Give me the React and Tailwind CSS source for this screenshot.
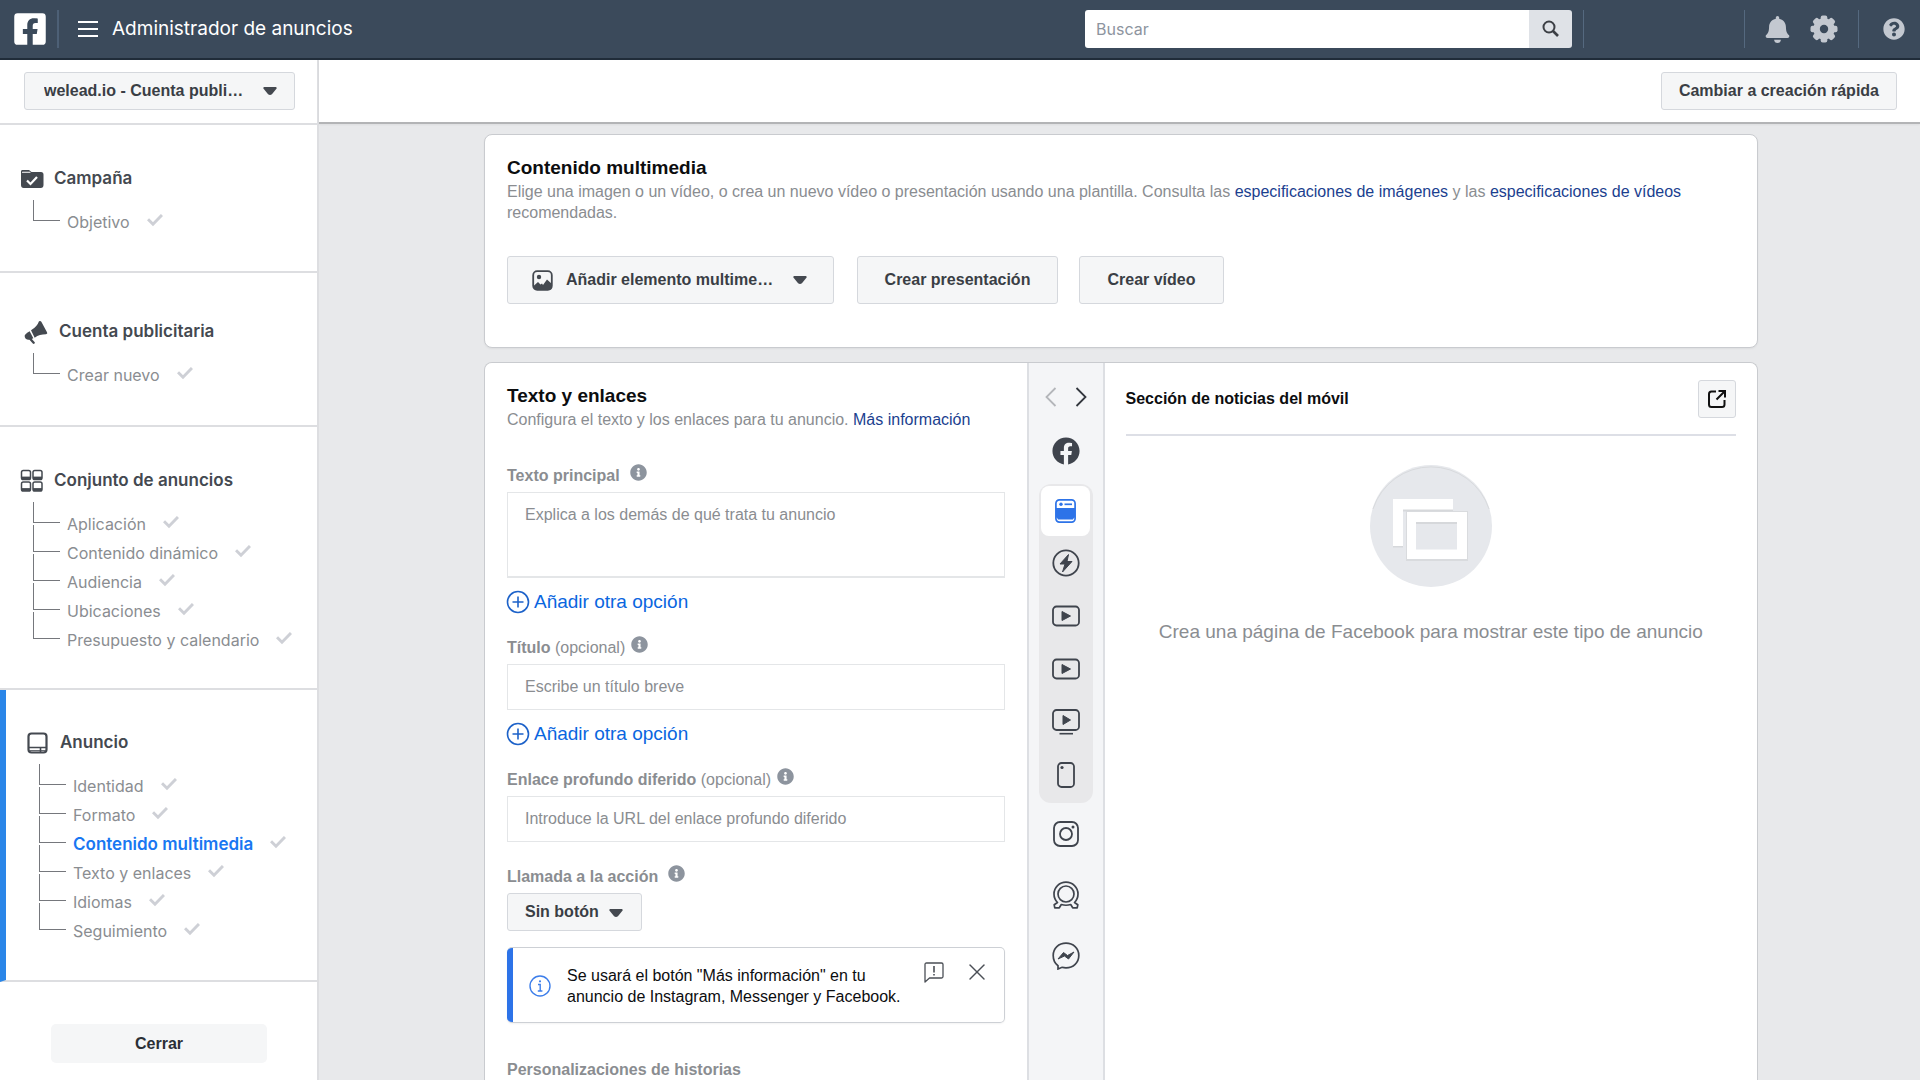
import { FaFacebook, FaFacebookSquare, FaBell, FaQuestionCircle, FaInfoCircle } from 'react-icons/fa';
import { X } from 'lucide-react';

//------------------------------------------------------------------------------------------------
// Navigation data
//------------------------------------------------------------------------------------------------
const sections = [
  {
    title: 'Campaña',
    icon: FolderIcon,
    pad: 'pt-[42px] pb-12',
    items: ['Objetivo'],
  },
  {
    title: 'Cuenta publicitaria',
    icon: MegaphoneIcon,
    pad: 'pt-[47px] pb-[49px]',
    items: ['Crear nuevo'],
  },
  {
    title: 'Conjunto de anuncios',
    icon: GridIcon,
    pad: 'pt-[42px] pb-[47px]',
    items: ['Aplicación', 'Contenido dinámico', 'Audiencia', 'Ubicaciones', 'Presupuesto y calendario'],
  },
  {
    title: 'Anuncio',
    icon: AdIcon,
    pad: 'pt-[41px] pb-12',
    active: true,
    items: ['Identidad', 'Formato', 'Contenido multimedia', 'Texto y enlaces', 'Idiomas', 'Seguimiento'],
  },
];

const feedPlacements = [
  { label: 'Artículos instantáneos', icon: BoltIcon },
  { label: 'Vídeos in-stream', icon: PlayIcon },
  { label: 'Vídeos sugeridos', icon: PlayIcon },
  { label: 'Marketplace', icon: TvIcon },
  { label: 'Historias', icon: PhoneIcon },
];

const otherPlacements = [
  { label: 'Instagram', icon: InstagramIcon },
  { label: 'Audience Network', icon: AudienceIcon },
  { label: 'Messenger', icon: MessengerIcon },
];

//------------------------------------------------------------------------------------------------
// Icons
//------------------------------------------------------------------------------------------------
function Caret({ className = '' }) {
  return (
    <svg className={`w-[14px] h-2 shrink-0 ${className}`} viewBox="0 0 14 8" fill="#444950" aria-hidden="true">
      <path d="M1.6 0h10.8c1.2 0 1.6 1 1 1.8L8.9 7.2c-1 1-2.8 1-3.8 0L.6 1.8C0 1 .4 0 1.6 0z" />
    </svg>
  );
}

// The tick sits in the upper part of its box, a little above the middle of the text
function Check() {
  return (
    <svg className="w-4 h-[17px] shrink-0" viewBox="0 0 16 17" fill="none" stroke="#ced0d6" strokeWidth="3" aria-hidden="true">
      <path d="M1 5.2l5 5L15 1" />
    </svg>
  );
}

function Chevron({ d, color }) {
  return (
    <svg className="w-3 h-5" viewBox="0 0 12 20" fill="none" stroke={color} strokeWidth="1.8" aria-hidden="true">
      <path d={d} />
    </svg>
  );
}

function FolderIcon() {
  return (
    <svg className="w-6 h-5" viewBox="0 0 24 20" aria-hidden="true">
      <path d="M1 4V2.5C1 1.4 1.9 1 3 1h6l2.5 2H21c1.7 0 2.5 1 2.5 2.5V16c0 1.8-1 3-2.7 3H3.7C2 19 1 17.800 1 16z" fill="#444950" />
      <path d="M2.5 3.3h7.5" stroke="#fff" strokeWidth="1.1" strokeLinecap="round" />
      <path d="M7 11.5l3.5 3.5 6.5-7" fill="none" stroke="#fff" strokeWidth="2.2" />
    </svg>
  );
}

function MegaphoneIcon() {
  return (
    <svg className="w-[29px] h-6" viewBox="-10 0 87 72" fill="#444950" aria-hidden="true">
      <path d="M47 4q4-3 7 1l17 32q3 5-3 6-19 0-34 10L23 31Q41 21 47 4z" />
      <path d="M19 34l11 21q-8 5-16 4Q4 57 4 47q1-5 15-13z" />
      <path d="M21 57l10 11" stroke="#444950" strokeWidth="7" strokeLinecap="round" />
    </svg>
  );
}

function GridIcon() {
  return (
    <svg className="w-6 h-6" viewBox="0 0 24 24" aria-hidden="true">
      {[[1.5, 1.5], [13, 1.5], [1.5, 13], [13, 13]].map(([x, y]) => (
        <g key={`${x}-${y}`}>
          <rect x={x} y={y} width="9" height="9" rx="1.8" fill="none" stroke="#444950" strokeWidth="1.5" />
          <path d={`M${x} ${y + 7.5}h9`} stroke="#444950" strokeWidth="2.8" />
        </g>
      ))}
    </svg>
  );
}

function AdIcon() {
  return (
    <svg className="w-6 h-6" viewBox="0 0 24 24" fill="none" stroke="#444950" aria-hidden="true">
      <rect x="2.5" y="2.5" width="18" height="19" rx="3" strokeWidth="2.2" />
      <path d="M3 16.5h17M14.5 17v4" strokeWidth="1.6" />
      <path d="M4 19.7h15" strokeWidth="1" />
    </svg>
  );
}

function GearIcon() {
  return (
    <svg className="w-7 h-7" viewBox="0 0 28 28" aria-hidden="true">
      {[0, 45, 90, 135].map((deg) => (
        <rect key={deg} x="10.7" y="0.5" width="6.6" height="27" rx="2" fill="#c3c8d0" transform={`rotate(${deg} 14 14)`} />
      ))}
      <circle cx="14" cy="14" r="7.5" fill="none" stroke="#c3c8d0" strokeWidth="6.5" />
      <circle cx="14" cy="14" r="4.2" fill="#3b4a5b" />
    </svg>
  );
}

function SearchIcon() {
  return (
    <svg className="w-5 h-5" viewBox="0 0 20 20" fill="none" stroke="#3c3f45" aria-hidden="true">
      <circle cx="8" cy="8" r="5.5" strokeWidth="2" />
      <path d="M12 12l5 5" strokeWidth="2.6" />
    </svg>
  );
}

function ImageIcon() {
  return (
    <svg className="w-[21px] h-[21px]" viewBox="0 0 21 21" aria-hidden="true">
      <rect x="1.2" y="1.2" width="18.6" height="18.6" rx="4" fill="none" stroke="#444950" strokeWidth="1.8" />
      <circle cx="7" cy="7" r="2.2" fill="#444950" />
      <path d="M1.5 16l4.5-4 2.5 2.5 1.5-1 1 1.5 4-5.5 5 4.5v2.5q0 3.5-3.5 3.5h-12q-3 0-3-4z" fill="#444950" />
    </svg>
  );
}

function PlusCircle() {
  return (
    <svg className="w-6 h-6" viewBox="0 0 24 24" fill="none" stroke="#1d62c9" strokeWidth="1.6" aria-hidden="true">
      <circle cx="12" cy="12" r="10.5" />
      <path d="M12 6.5v11M6.5 12h11" />
    </svg>
  );
}

function OpenIcon() {
  return (
    <svg className="w-5 h-5" viewBox="0 0 20 20" fill="none" stroke="#111" strokeWidth="2" aria-hidden="true">
      <path d="M9 2.5H4.5q-2.5 0-2.5 2.5V15.5Q2 18 4.5 18h10.5q2.5 0 2.5-2.5V11" />
      <path d="M9.5 10.5L17 3M11.5 2h6.5v6.5" />
    </svg>
  );
}

function FeedIcon() {
  return (
    <svg className="w-[21px] h-6" viewBox="0 0 21 24" aria-hidden="true">
      <rect x="0.9" y="0.9" width="19.2" height="22.2" rx="3.5" fill="#fff" stroke="#2d73e8" strokeWidth="1.7" />
      <path d="M1 9h19v9.5H1z" fill="#2d73e8" />
      <path d="M1.5 18l1.5 2.5h15l1.5-2.5z" fill="#2d73e8" />
      <circle cx="6" cy="5.3" r="1.7" fill="#2d73e8" />
      <path d="M9.5 5.3h7.5" stroke="#2d73e8" strokeWidth="1.7" />
    </svg>
  );
}

function BoltIcon() {
  return (
    <svg className="w-7 h-7" viewBox="0 0 28 28" aria-hidden="true">
      <circle cx="14" cy="14" r="12.7" fill="none" stroke="#3f444d" strokeWidth="1.8" />
      <path d="M16.5 5.5L8 15h5l-2.5 8L20 12.500h-5z" fill="#3f444d" stroke="#3f444d" strokeLinejoin="round" />
    </svg>
  );
}

function PlayIcon() {
  return (
    <svg className="w-7 h-[22px]" viewBox="0 0 28 22" aria-hidden="true">
      <rect x="1" y="1.5" width="26" height="19" rx="3.5" fill="none" stroke="#3f444d" strokeWidth="1.8" />
      <path d="M10 6.5v9l8.5-4.5z" fill="#3f444d" stroke="#3f444d" strokeLinejoin="round" />
    </svg>
  );
}

function TvIcon() {
  return (
    <svg className="w-7 h-[26px]" viewBox="0 0 28 26" aria-hidden="true">
      <rect x="1" y="1" width="26" height="20" rx="3.5" fill="none" stroke="#3f444d" strokeWidth="1.8" />
      <path d="M11 6.5v9l7.5-4.5z" fill="#3f444d" stroke="#3f444d" strokeLinejoin="round" />
      <path d="M7.5 24.7h13.5" stroke="#3f444d" strokeWidth="1.6" />
    </svg>
  );
}

function PhoneIcon() {
  return (
    <svg className="w-[18px] h-[26px]" viewBox="0 0 18 26" aria-hidden="true">
      <rect x="1" y="1" width="16" height="24" rx="3.5" fill="none" stroke="#3f444d" strokeWidth="1.8" />
      <circle cx="5" cy="5.5" r="1.6" fill="#3f444d" />
    </svg>
  );
}

function InstagramIcon() {
  return (
    <svg className="w-[26px] h-[26px]" viewBox="0 0 26 26" fill="none" stroke="#3f444d" strokeWidth="1.8" aria-hidden="true">
      <rect x="1" y="1" width="24" height="24" rx="6" />
      <circle cx="13" cy="13" r="6" />
      <circle cx="20" cy="6" r="1.5" fill="#3f444d" stroke="none" />
    </svg>
  );
}

function AudienceIcon() {
  return (
    <svg className="w-7 h-7" viewBox="0 0 28 28" fill="none" stroke="#3f444d" strokeWidth="1.7" strokeLinejoin="round" aria-hidden="true">
      <circle cx="14" cy="13" r="8" />
      <path d="M5.5 21.5A12 12 0 1 1 22.5 21.5l3.3 2.3-.6 3h-4.5l-2-3.3q-4.7 1.5-9.4 0l-2 3.3H2.800l-.6-3z" />
    </svg>
  );
}

function MessengerIcon() {
  return (
    <svg className="w-7 h-7" viewBox="0 0 28 28" aria-hidden="true">
      <path d="M14 1.2c7.3 0 12.8 5.3 12.8 12.3S21.3 25.8 14 25.8q-2 0-4-.5L6 27v-3.3C3 21.5 1.2 18 1.2 13.5 1.2 6.5 6.7 1.2 14 1.2z" fill="none" stroke="#3f444d" strokeWidth="1.7" />
      <path d="M6 17l5.5-6.500 4 3 6.500-3.500-5.500 7-4-3z" fill="#3f444d" stroke="#3f444d" strokeLinejoin="round" />
    </svg>
  );
}

function FeedbackIcon() {
  return (
    <svg className="w-5 h-[22px]" viewBox="0 0 20 22" fill="none" stroke="#4b4f56" strokeWidth="1.3" strokeLinejoin="round" aria-hidden="true">
      <path d="M1 20V2.5Q1 1 2.5 1h15Q19 1 19 2.5v12q0 1.5-1.5 1.5H5.5z" />
      <path d="M10 4v6.5M10 12v1.5" strokeWidth="1.6" />
    </svg>
  );
}

function EmptyPreview() {
  return (
    <svg className="w-[122px] h-[122px]" viewBox="0 0 122 122" aria-hidden="true">
      <circle cx="61" cy="61" r="61" fill="#e6e8ec" />
      <path d="M3 44A61 61 0 0 1 119 44" fill="none" stroke="#d8dadd" strokeWidth="1" />
      <path d="M23 35.5h60v11H33v36H23z" fill="#d6d8db" />
      <path d="M23 34h60v10.5H33V81H23z" fill="#fff" />
      <path d="M36 46h62v50H36z" fill="#d9dbde" />
      <path d="M37 47h60v47H37z" fill="#fff" />
      <path d="M46 57h41v27.5H46z" fill="#e6e8ec" />
      <path d="M46 58h41" stroke="#d6d8db" strokeWidth="2" />
    </svg>
  );
}

//------------------------------------------------------------------------------------------------
// Header
//------------------------------------------------------------------------------------------------
function Divider() {
  return <span className="w-px h-[38px] bg-[#55697f]" />;
}

function Header() {
  return (
    <header className="flex shrink-0 items-center h-15 pl-[13px] pr-[15px] bg-[#3b4a5b] border-b-2 border-[#202c39] font-['Inter',sans-serif]">
      <a href="#" aria-label="Facebook" className="text-white">
        <FaFacebookSquare className="w-[34px] h-[36px]" />
      </a>
      <span className="ml-[10px] w-[2px] h-[38px] bg-[#4d6076]" />
      <button type="button" aria-label="Menú" className="ml-[19px] flex flex-col gap-[5px]">
        <span className="w-5 h-[2px] bg-white" />
        <span className="w-5 h-[2px] bg-white" />
        <span className="w-5 h-[2px] bg-white" />
      </button>
      <h1 className="ml-[14px] text-[19px] leading-6 text-white">Administrador de anuncios</h1>

      <form className="ml-auto flex w-[487px] h-[38px] rounded-[3px] overflow-hidden" onSubmit={(e) => e.preventDefault()}>
        <input
          type="text"
          aria-label="Buscar"
          placeholder="Buscar"
          className="flex-1 min-w-0 px-[11px] bg-white text-base placeholder:text-[#8d949e] outline-none"
        />
        <button type="submit" aria-label="Buscar" className="flex w-[43px] items-center justify-center bg-[#dfe2e7]">
          <SearchIcon />
        </button>
      </form>
      <div className="flex items-center pl-[11px]">
        <Divider />
        <span className="w-40" />
        <Divider />
        <button type="button" aria-label="Notificaciones" className="ml-5">
          <FaBell className="w-[25px] h-[27px] text-[#c3c8d0]" />
        </button>
        <button type="button" aria-label="Configuración" className="ml-5">
          <GearIcon />
        </button>
        <span className="w-5" />
        <Divider />
        <button type="button" aria-label="Ayuda" className="ml-6">
          <FaQuestionCircle className="w-[22px] h-[22px] text-[#c3c8d0]" />
        </button>
      </div>
    </header>
  );
}

//------------------------------------------------------------------------------------------------
// Sidebar
//------------------------------------------------------------------------------------------------
function NavSection({ title, icon: Icon, pad, items, active }) {
  return (
    <section className={`${pad} border-b-2 border-b-[#dddee1] ${active ? 'border-l-6 border-l-[#2a86e8]' : ''}`}>
      <h2 className="flex items-center gap-[10px] h-6 pl-5 text-[17px] font-semibold text-[#444950]">
        <Icon />
        {title}
      </h2>
      <ul className="mt-[3px] pl-[33px]">
        {items.map((item) => (
          <li key={item} className="group flex items-start h-[29px]">
            <span className="w-[27px] h-[27px] shrink-0 border-l border-b border-[#75777c] group-first:mt-[6px] group-first:h-[21px]" />
            <a href="#" className="mt-4 ml-[7px] flex items-center gap-[17px] leading-6 whitespace-nowrap">
              <span className={active && item === 'Contenido multimedia' ? 'text-[17px] font-semibold text-[#1877f2]' : 'text-base leading-6 text-[#8a8d91]'}>
                {item}
              </span>
              <Check />
            </a>
          </li>
        ))}
      </ul>
    </section>
  );
}

function Sidebar() {
  return (
    <aside className="w-[319px] shrink-0 bg-white border-r-2 border-[#dddee1] overflow-y-auto [scrollbar-width:none]">
      <div className="h-[65px] pt-3 pl-6 pr-[22px] border-b-2 border-[#dddee1]">
        <div className="relative">
          <select
            aria-label="Cuenta publicitaria"
            className="appearance-none w-full h-[38px] pl-[19px] bg-[#f5f6f7] border border-[#d5d8dd] rounded-[3px] text-base font-bold text-[#3a3e45]"
          >
            <option>welead.io - Cuenta publi…</option>
          </select>
          <Caret className="absolute right-[18px] top-[15px] pointer-events-none" />
        </div>
      </div>
      <nav className="font-['Inter',sans-serif]">
        {sections.map((section) => (
          <NavSection key={section.title} {...section} />
        ))}
      </nav>
      <div className="pt-[42px] pl-[51px] pr-[50px]">
        <button type="button" className="w-full h-[39px] rounded-[5px] bg-[#f5f6f7] text-base font-bold text-[#2b2f36]">
          Cerrar
        </button>
      </div>
    </aside>
  );
}

//------------------------------------------------------------------------------------------------
// Form pieces
//------------------------------------------------------------------------------------------------
function FieldLabel({ htmlFor, children, optional }) {
  return (
    <div className="flex h-6 mb-1 text-[#8a8d91]">
      <label htmlFor={htmlFor} className="text-base leading-6">
        <b>{children}</b>
        {optional && ' (opcional)'}
      </label>
      <button type="button" aria-label="Información" className={`self-start ${optional ? 'ml-[6px]' : 'ml-[10px]'}`}>
        <FaInfoCircle className="w-[17px] h-[17px] text-[#8d949e]" />
      </button>
    </div>
  );
}

function AddOption() {
  return (
    <button type="button" className="mt-3 -ml-px flex items-center gap-1 text-[19px] leading-6 text-[#0a66e0]">
      <PlusCircle />
      Añadir otra opción
    </button>
  );
}

function TextForm() {
  return (
    <form className="px-[22px] pt-5 bg-white rounded-tl-[7px]" onSubmit={(e) => e.preventDefault()}>
      <h2 className="text-[19px] leading-[25px] font-bold text-[#0c0d0f]">Texto y enlaces</h2>
      <p className="mt-px text-base leading-[21px] text-[#8a8d91]">
        Configura el texto y los enlaces para tu anuncio.{' '}
        <a href="#" className="text-[#1b3f8f]">Más información</a>
      </p>

      <div className="mt-[34px]">
        <FieldLabel htmlFor="main-text">Texto principal</FieldLabel>
        <textarea
          id="main-text"
          placeholder="Explica a los demás de qué trata tu anuncio"
          className="block w-full h-[86px] px-[17px] py-[10px] border border-b-2 border-[#e4e6e8] text-base placeholder:text-[#8a8d91] resize-none outline-none"
        />
        <AddOption />
      </div>

      <div className="mt-[22px]">
        <FieldLabel htmlFor="headline" optional>Título</FieldLabel>
        <input
          id="headline"
          type="text"
          placeholder="Escribe un título breve"
          className="block w-full h-[46px] px-[17px] border border-[#e4e6e8] text-base placeholder:text-[#8a8d91] outline-none"
        />
        <AddOption />
      </div>

      <div className="mt-[22px]">
        <FieldLabel htmlFor="deep-link" optional>Enlace profundo diferido</FieldLabel>
        <input
          id="deep-link"
          type="text"
          placeholder="Introduce la URL del enlace profundo diferido"
          className="block w-full h-[46px] px-[17px] border border-[#e4e6e8] text-base placeholder:text-[#8a8d91] outline-none"
        />
      </div>

      <div className="mt-[23px]">
        <FieldLabel htmlFor="cta">Llamada a la acción</FieldLabel>
        <div className="relative w-[135px]">
          <select
            id="cta"
            className="block appearance-none w-full h-[38px] pl-[17px] bg-[#f5f6f7] border border-[#d5d8dd] rounded-[3px] text-base font-bold text-[#3a3e45]"
          >
            <option>Sin botón</option>
          </select>
          <Caret className="absolute right-[19px] top-4 pointer-events-none" />
        </div>
      </div>

      <div className="mt-4 flex h-[76px] border border-l-0 border-[#cdd0d5] rounded-[5px] shadow-xs overflow-hidden">
        <span className="w-[6px] bg-[#2d73e8]" />
        <svg className="w-[22px] h-[22px] ml-4 mt-[27px]" viewBox="0 0 22 22" fill="none" stroke="#3d7eea" strokeWidth="1.4" aria-hidden="true">
          <circle cx="11" cy="11" r="10" />
          <path d="M9 9.5h2.2V16M8.8 16h4.6" />
          <circle cx="11" cy="6.3" r="1.1" fill="#3d7eea" stroke="none" />
        </svg>
        <p className="ml-4 mt-[17px] w-[342px] text-base leading-[21px] text-[#0c0d0f]">
          Se usará el botón "Más información" en tu anuncio de Instagram, Messenger y Facebook.
        </p>
        <button type="button" aria-label="Enviar comentarios" className="ml-auto mt-[14px] self-start">
          <FeedbackIcon />
        </button>
        <button type="button" aria-label="Cerrar" className="ml-[19px] mr-[13px] mt-[10px] self-start">
          <X size={28} strokeWidth={1.2} color="#4b4f56" />
        </button>
      </div>

      <h3 className="mt-[37px] text-base leading-5 font-bold text-[#8a8d91]">Personalizaciones de historias</h3>
    </form>
  );
}

//------------------------------------------------------------------------------------------------
// Placement strip and preview
//------------------------------------------------------------------------------------------------
function PlacementStrip() {
  return (
    <div className="flex flex-col items-center pt-[14px] bg-[#f4f5f7] border-x-2 border-[#dddfe3]">
      <div className="flex items-center h-10 gap-[18px]">
        <button type="button" aria-label="Anterior">
          <Chevron d="M10.5 1L1.5 10l9 9" color="#b4b6ba" />
        </button>
        <button type="button" aria-label="Siguiente">
          <Chevron d="M1.5 1l9 9-9 9" color="#33373e" />
        </button>
      </div>
      <button type="button" aria-label="Facebook" className="flex h-[67px] items-center">
        <FaFacebook className="w-7 h-7 text-[#3f444d]" />
      </button>
      <div className="flex flex-col items-center w-[54px] py-[2px] bg-[#e8e8ea] rounded-xl">
        <button type="button" aria-label="Sección de noticias del móvil" className="flex w-[49px] h-[50px] items-center justify-center bg-white rounded-lg">
          <FeedIcon />
        </button>
        {feedPlacements.map(({ label, icon: Icon }) => (
          <button key={label} type="button" aria-label={label} className="flex h-[53px] items-center">
            <Icon />
          </button>
        ))}
      </div>
      {otherPlacements.map(({ label, icon: Icon }) => (
        <button key={label} type="button" aria-label={label} className="flex h-[61px] items-center">
          <Icon />
        </button>
      ))}
    </div>
  );
}

function Preview() {
  return (
    <section className="flex flex-col px-[21px] bg-white rounded-tr-[7px]">
      <div className="flex items-center justify-between h-[73px] border-b-2 border-[#dddfe6]">
        <h2 className="text-base font-bold text-[#0c0d0f]">Sección de noticias del móvil</h2>
        <button type="button" aria-label="Abrir vista previa" className="flex w-[38px] h-[38px] items-center justify-center bg-[#f5f6f7] border border-[#d5d8dd] rounded-[3px]">
          <OpenIcon />
        </button>
      </div>
      <div className="flex flex-col items-center pt-[29px]">
        <EmptyPreview />
        <p className="mt-[33px] text-[19px] leading-6 text-[#8a8d91]">
          Crea una página de Facebook para mostrar este tipo de anuncio
        </p>
      </div>
    </section>
  );
}

//------------------------------------------------------------------------------------------------
// Media card
//------------------------------------------------------------------------------------------------
function MediaCard() {
  return (
    <section className="shrink-0 px-[22px] pt-5 pb-[43px] bg-white border border-[#c9cbcf] rounded-lg shadow-xs">
      <h2 className="text-[19px] leading-[25px] font-bold text-[#0c0d0f]">Contenido multimedia</h2>
      <p className="mt-px text-base leading-[21px] text-[#8a8d91]">
        Elige una imagen o un vídeo, o crea un nuevo vídeo o presentación usando una plantilla. Consulta las{' '}
        <a href="#" className="text-[#1b3f8f]">especificaciones de imágenes</a> y las{' '}
        <a href="#" className="text-[#1b3f8f]">especificaciones de vídeos</a> recomendadas.
      </p>
      <div className="mt-[33px] flex text-base font-bold text-[#3a3e45]">
        <button type="button" aria-haspopup="menu" className="flex items-center w-[327px] h-12 pl-6 bg-[#f5f6f7] border border-[#d5d8dd] rounded-[3px]">
          <ImageIcon />
          <span className="ml-[13px]">Añadir elemento multime…</span>
          <Caret className="ml-auto mr-[26px]" />
        </button>
        <button type="button" className="ml-[23px] w-[201px] h-12 bg-[#f5f6f7] border border-[#d5d8dd] rounded-[3px]">
          Crear presentación
        </button>
        <button type="button" className="ml-[21px] w-[145px] h-12 bg-[#f5f6f7] border border-[#d5d8dd] rounded-[3px]">
          Crear vídeo
        </button>
      </div>
    </section>
  );
}

//------------------------------------------------------------------------------------------------
// App
//------------------------------------------------------------------------------------------------
export default function App() {
  return (
    <div className="flex flex-col h-screen bg-[#e8e9eb] font-['Liberation_Sans',Arial,sans-serif]">
      <Header />
      <div className="flex flex-1 min-h-0">
        <Sidebar />
        <div className="flex flex-1 min-w-0 flex-col">
          <div className="z-10 flex shrink-0 justify-end h-[64px] pt-3 pr-[23px] bg-white border-b-2 border-[#b3b4b6] shadow-xs">
            <button type="button" className="h-[38px] px-[17px] bg-[#f5f6f7] border border-[#d5d8dd] rounded-[3px] text-base font-bold text-[#3a3e45]">
              Cambiar a creación rápida
            </button>
          </div>
          <main className="flex flex-1 min-h-0 flex-col gap-[14px] pt-[10px] pl-[165px] pr-[162px] overflow-y-auto [scrollbar-width:none]">
            <MediaCard />
            <div className="grid flex-1 grid-cols-[542fr_78px_653fr] border border-b-0 border-[#c9cbcf] rounded-t-lg">
              <TextForm />
              <PlacementStrip />
              <Preview />
            </div>
          </main>
        </div>
      </div>
    </div>
  );
}
